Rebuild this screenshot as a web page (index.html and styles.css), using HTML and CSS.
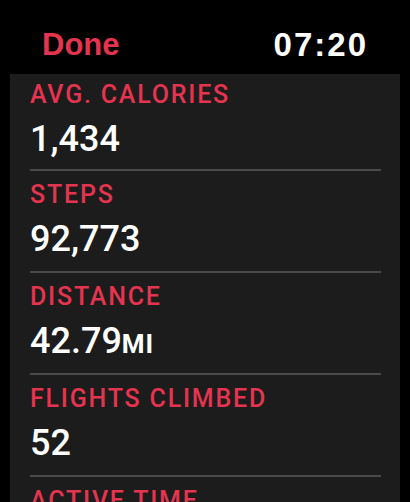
FILE: index.html
```html
<!DOCTYPE html>
<html lang="en">
<head>
    <meta charset="UTF-8">
    <meta name="viewport" content="width=device-width, initial-scale=1.0">
    <title>Workout Summary</title>
    <link rel="stylesheet" href="styles.css">
</head>
<body>
    <header class="top-bar">
        <span class="done">Done</span>
        <span class="clock">07:20</span>
    </header>
    <main class="card">
        <ul class="stats">
            <li class="stat">
                <div class="stat-label">AVG. CALORIES</div>
                <div class="stat-value">1,434</div>
            </li>
            <li class="stat">
                <div class="stat-label">STEPS</div>
                <div class="stat-value">92,773</div>
            </li>
            <li class="stat">
                <div class="stat-label">DISTANCE</div>
                <div class="stat-value">42.79<span class="unit">MI</span></div>
            </li>
            <li class="stat">
                <div class="stat-label">FLIGHTS CLIMBED</div>
                <div class="stat-value">52</div>
            </li>
            <li class="stat">
                <div class="stat-label">ACTIVE TIME</div>
                <div class="stat-value">6:12:40</div>
            </li>
        </ul>
    </main>
</body>
</html>
```

FILE: styles.css
```css
html, body {
    height: 100%;
}
body {
    background-color: #000000;
    margin: 0;
    font-family: 'Roboto', 'Liberation Sans', sans-serif;
    overflow: hidden;
}
.top-bar {
    display: flex;
    justify-content: space-between;
    align-items: flex-start;
    height: 74px;
    padding: 28px 42px 0 42px;
    box-sizing: border-box;
    line-height: 34px;
    font-family: 'Liberation Sans', sans-serif;
    font-weight: bold;
}
.done {
    color: #e4344f;
    font-size: 31px;
}
.clock {
    color: #ffffff;
    font-size: 33px;
    letter-spacing: 2px;
}
.card {
    background-color: #1c1c1c;
    margin: 0 10px;
    height: 428px;
    overflow: hidden;
}
.stats {
    list-style: none;
    margin: -3px 0 0 0;
    padding: 0 19px 0 20px;
}
.stat {
    border-bottom: 2px solid #4a4a4a;
    padding: 10px 0 10px 0;
    height: 80px;
}
.stat:first-child {
    height: 78px;
}
.stat-label {
    color: #e4344f;
    font-size: 25px;
    font-weight: 500;
    letter-spacing: 1.8px;
    line-height: 28px;
}
.stat-value {
    color: #ffffff;
    font-size: 36px;
    font-weight: 500;
    line-height: 44px;
    margin-top: 8px;
}
.unit {
    font-size: 26px;
    font-weight: bold;
    letter-spacing: 1px;
}
```
